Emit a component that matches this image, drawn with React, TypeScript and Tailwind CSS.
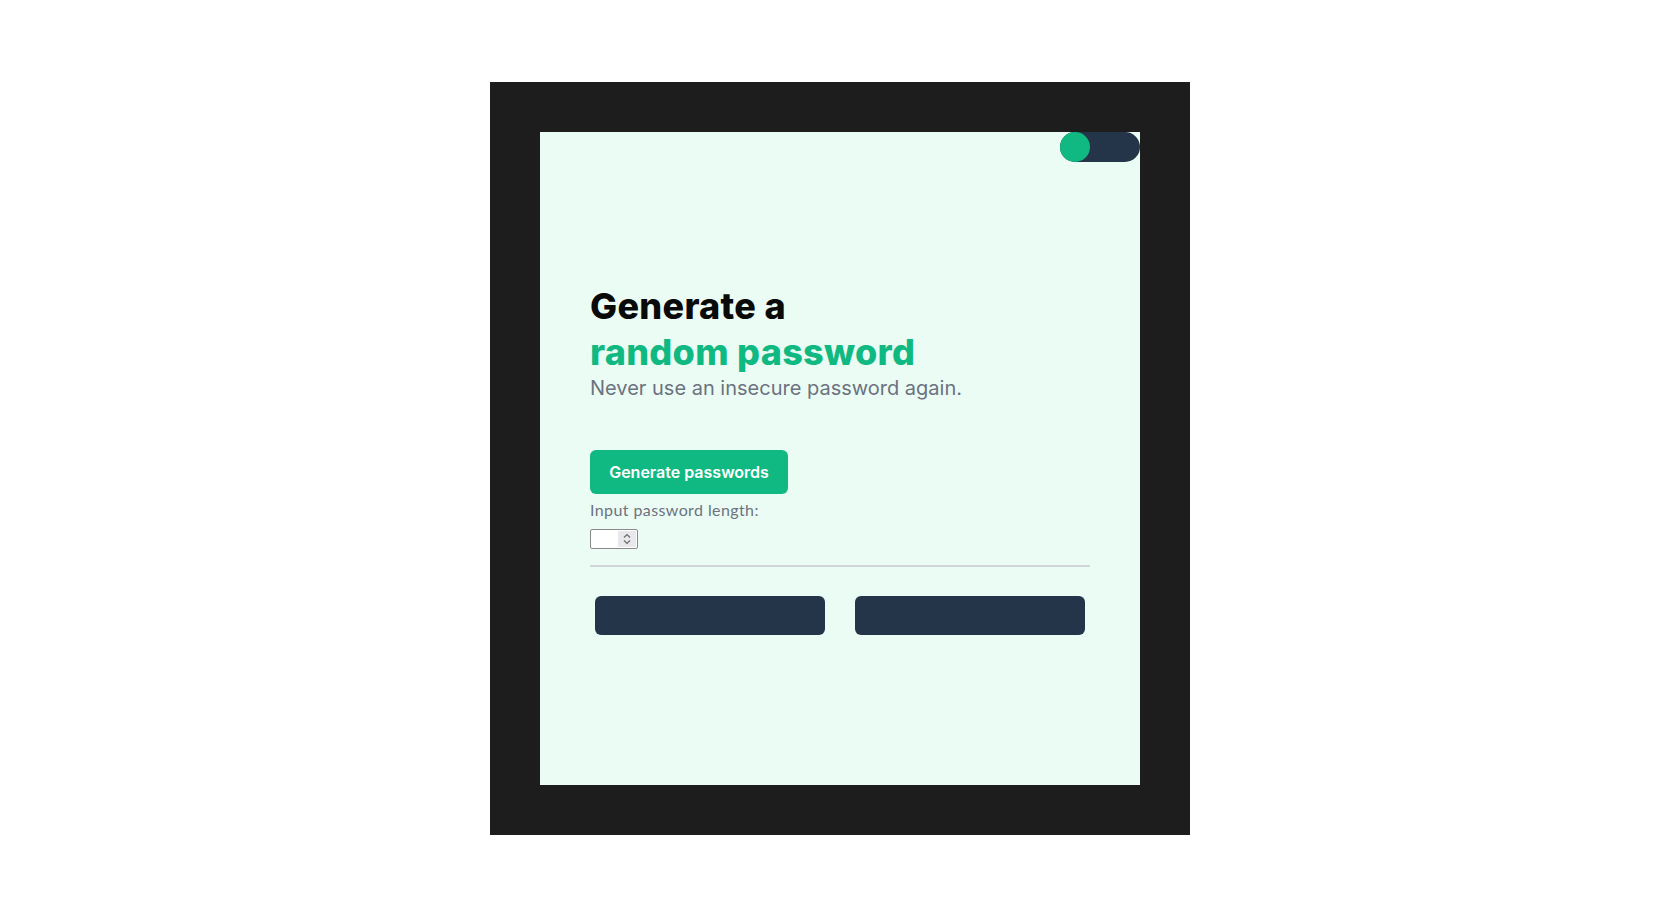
import React from "react";

export default function App() {
  return (
    <div className="min-h-screen w-full bg-white flex items-center justify-center">
      <div className="bg-[#1d1d1d] p-[50px]">
        <div className="w-[600px] h-[653px] bg-[#ebfcf4] flex flex-col">
          <div className="flex justify-end">
            <div className="relative w-[80px] h-[30px] rounded-full bg-[#253549]">
              <div className="absolute left-0 top-0 w-[30px] h-[30px] rounded-full bg-[#10b981]" />
            </div>
          </div>
          <div className="px-[50px] mt-[121px] flex flex-col items-start">
            <h1 className="font-['Inter',sans-serif] text-[36px] leading-[46px] font-extrabold tracking-[0.3px] text-[#0a0a0a]">
              Generate a
              <br />
              <span className="text-[#10b981]">random password</span>
            </h1>
            <p className="-mt-[1px] font-['Inter',sans-serif] text-[20px] leading-[28px] text-[#6b7280]">
              Never use an insecure password again.
            </p>
            <button className="mt-[48px] h-[44px] w-[198px] rounded-md bg-[#10b981] text-white font-['Inter',sans-serif] font-semibold text-[16px]">
              Generate passwords
            </button>
            <label className="mt-[6px] font-['Lato',sans-serif] text-[16px] leading-[20px] tracking-[0.4px] text-[#6b7280]">
              Input password length:
            </label>
            <div className="relative mt-[9px] w-[48px] h-[20px] bg-white border border-[#8a8a8a] rounded-[2px]">
              <div className="absolute right-[1px] top-[1px] bottom-[1px] w-[18px] bg-[#e9e9ed] flex flex-col items-center justify-center">
                <svg width="10" height="14" viewBox="0 0 10 14" fill="none" stroke="#6b6b6b" strokeWidth="1.2">
                  <path d="M2 5.5 L5 2.5 L8 5.5" />
                  <path d="M2 8.5 L5 11.5 L8 8.5" />
                </svg>
              </div>
            </div>
            <div className="mt-[16px] w-full h-[2px] bg-[#d1d5db]" />
            <div className="mt-[29px] w-full px-[5px] flex justify-between">
              <div className="w-[230px] h-[39px] rounded-md bg-[#253549]" />
              <div className="w-[230px] h-[39px] rounded-md bg-[#253549]" />
            </div>
          </div>
        </div>
      </div>
    </div>
  );
}
